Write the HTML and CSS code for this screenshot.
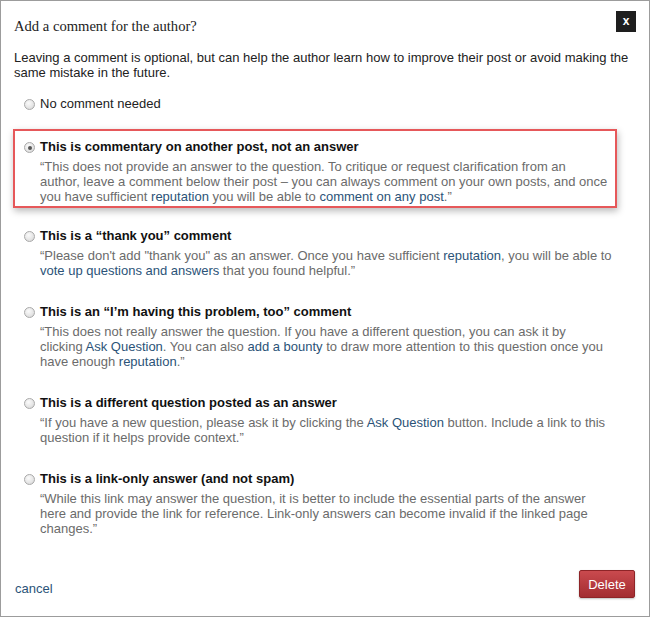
FILE: index.html
```html
<!DOCTYPE html>
<html lang="en">
<head>
<meta charset="utf-8">
<title>Add a comment for the author?</title>
<link rel="stylesheet" href="styles.css">
</head>
<body>
<div class="dialog">
  <div class="head">
    <h1 class="title">Add a comment for the author?</h1>
    <button class="close" type="button">x</button>
  </div>
  <p class="intro">Leaving a comment is optional, but can help the author learn how to improve their post or avoid making the same mistake in the future.</p>
  <ul class="options">
    <li class="option">
      <span class="radio"></span>
      <div class="body">
        <div class="label label-plain">No comment needed</div>
      </div>
    </li>
    <li class="option selected">
      <span class="radio checked"></span>
      <div class="body">
        <div class="label">This is commentary on another post, not an answer</div>
        <div class="desc">“This does not provide an answer to the question. To critique or request clarification from an<br>author, leave a comment below their post – you can always comment on your own posts, and once<br>you have sufficient <a href="#">reputation</a> you will be able to <a href="#">comment on any post</a>.”</div>
      </div>
    </li>
    <li class="option">
      <span class="radio"></span>
      <div class="body">
        <div class="label">This is a “thank you” comment</div>
        <div class="desc">“Please don't add "thank you" as an answer. Once you have sufficient <a href="#">reputation</a>, you will be able to<br><a href="#">vote up questions and answers</a> that you found helpful.”</div>
      </div>
    </li>
    <li class="option">
      <span class="radio"></span>
      <div class="body">
        <div class="label">This is an “I’m having this problem, too” comment</div>
        <div class="desc">“This does not really answer the question. If you have a different question, you can ask it by<br>clicking <a href="#">Ask Question</a>. You can also <a href="#">add a bounty</a> to draw more attention to this question once you<br>have enough <a href="#">reputation</a>.”</div>
      </div>
    </li>
    <li class="option">
      <span class="radio"></span>
      <div class="body">
        <div class="label">This is a different question posted as an answer</div>
        <div class="desc">“If you have a new question, please ask it by clicking the <a href="#">Ask Question</a> button. Include a link to this<br>question if it helps provide context.”</div>
      </div>
    </li>
    <li class="option">
      <span class="radio"></span>
      <div class="body">
        <div class="label">This is a link-only answer (and not spam)</div>
        <div class="desc">“While this link may answer the question, it is better to include the essential parts of the answer<br>here and provide the link for reference. Link-only answers can become invalid if the linked page<br>changes.”</div>
      </div>
    </li>
  </ul>
  <div class="foot">
    <a class="cancel" href="#">cancel</a>
    <button class="delete" type="button">Delete</button>
  </div>
</div>
</body>
</html>
```
FILE: styles.css
```css
* { box-sizing: border-box; }

html, body {
  margin: 0;
  padding: 0;
  background: #fff;
}

body {
  font-family: "Liberation Sans", Arial, sans-serif;
  font-size: 13px;
  color: #222;
}

.dialog {
  width: 650px;
  height: 617px;
  border: 1px solid #9c9c9c;
  padding: 10px 13px 18px 12px;
  display: flex;
  flex-direction: column;
  background: #fff;
}

.head {
  display: flex;
  justify-content: space-between;
  align-items: flex-start;
}

.title {
  margin: 6px 0 0 1px;
  font-family: "Liberation Serif", "Times New Roman", serif;
  font-weight: normal;
  font-size: 14.6px;
  line-height: 18px;
  color: #222;
}

.close {
  width: 20px;
  height: 21px;
  margin: 0;
  padding: 0;
  border: none;
  background: #1e1e1e;
  color: #fff;
  font-family: "Liberation Sans", Arial, sans-serif;
  font-weight: bold;
  font-size: 12px;
  line-height: 19px;
  text-align: center;
  cursor: pointer;
}

.intro {
  margin: 15px 0 0 1px;
  line-height: 15px;
  color: #222;
}

.options {
  list-style: none;
  margin: 6px 19px 0 0;
  padding: 0;
}

.option {
  display: flex;
  align-items: flex-start;
  border: 2px solid transparent;
  padding: 7px 0 3px 9px;
  margin-bottom: 11px;
}

.option.selected {
  border-color: #e6585a;
  padding-bottom: 2px;
  margin-bottom: 10px;
  box-shadow: 1px 3px 7px rgba(0, 0, 0, 0.28);
}

.radio {
  flex: none;
  width: 11px;
  height: 11px;
  margin-top: 4px;
  border-radius: 50%;
  border: 1px solid #a9a9a9;
  background: radial-gradient(circle at 40% 35%, #fbfbfb 0%, #e6e6e6 55%, #d0d0d0 100%);
  position: relative;
}

.radio.checked::after {
  content: "";
  position: absolute;
  left: 2.5px;
  top: 2.5px;
  width: 4px;
  height: 4px;
  border-radius: 50%;
  background: #555;
}

.body {
  margin-left: 5px;
  width: 575px;
}

.label {
  font-weight: bold;
  line-height: 18px;
  color: #111;
}

.label.label-plain {
  font-weight: normal;
  color: #222;
}

.desc {
  margin-top: 3px;
  line-height: 15px;
  color: #6b6b6b;
}

.desc a {
  color: #2b5378;
  text-decoration: none;
}

.foot {
  margin-top: auto;
  display: flex;
  justify-content: space-between;
  align-items: flex-end;
}

.cancel {
  margin-left: 2px;
  padding-bottom: 2px;
  line-height: 15px;
  color: #2b5378;
  text-decoration: none;
}

.delete {
  width: 56px;
  height: 28px;
  margin: 0 1px 0 0;
  padding: 0;
  border: 1px solid #8e2427;
  border-radius: 2px;
  background: linear-gradient(#ca4a4e, #a32d31);
  box-shadow: 0 1px 2px rgba(0, 0, 0, 0.25);
  color: #fff;
  font-family: "Liberation Sans", Arial, sans-serif;
  font-size: 13px;
  cursor: pointer;
}
```
